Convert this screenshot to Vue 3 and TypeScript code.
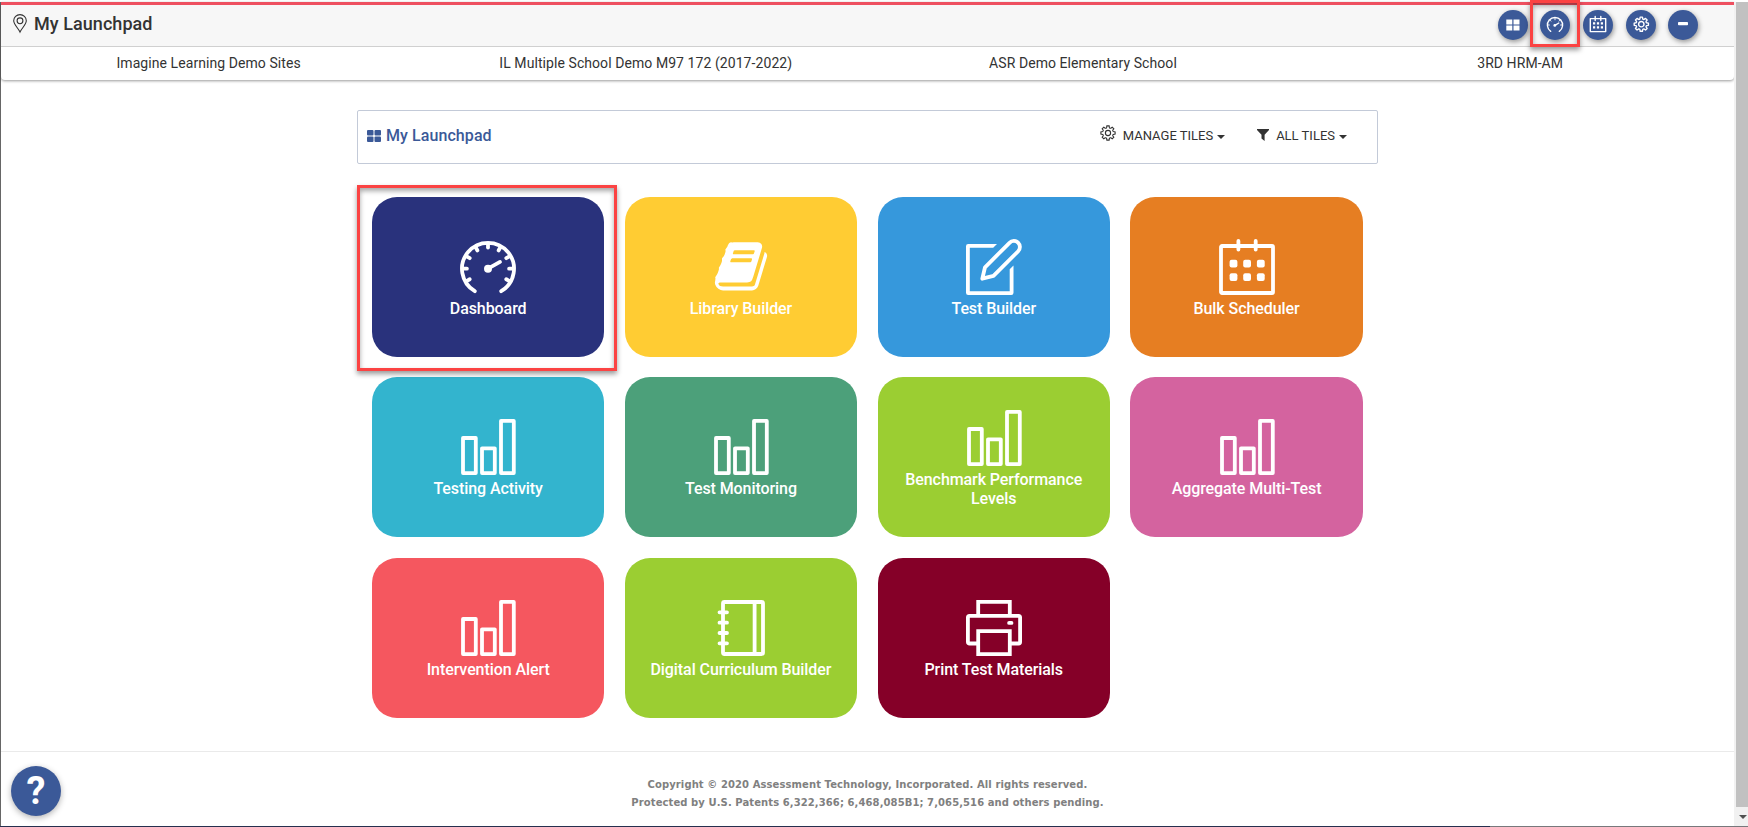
<script setup lang="ts">
type IconName = 'gauge' | 'book' | 'edit' | 'calendar' | 'bars' | 'notebook' | 'printer'

interface Tile {
  label: string
  icon: IconName
  tone: string
  highlighted?: boolean
}

const context: string[] = [
  'Imagine Learning Demo Sites',
  'IL Multiple School Demo M97 172 (2017-2022)',
  'ASR Demo Elementary School',
  '3RD HRM-AM',
]

const tiles: Tile[] = [
  { label: 'Dashboard', icon: 'gauge', tone: 'navy', highlighted: true },
  { label: 'Library Builder', icon: 'book', tone: 'yellow' },
  { label: 'Test Builder', icon: 'edit', tone: 'blue' },
  { label: 'Bulk Scheduler', icon: 'calendar', tone: 'orange' },
  { label: 'Testing Activity', icon: 'bars', tone: 'cyan' },
  { label: 'Test Monitoring', icon: 'bars', tone: 'green' },
  { label: 'Benchmark Performance Levels', icon: 'bars', tone: 'lime' },
  { label: 'Aggregate Multi-Test', icon: 'bars', tone: 'pink' },
  { label: 'Intervention Alert', icon: 'bars', tone: 'red' },
  { label: 'Digital Curriculum Builder', icon: 'notebook', tone: 'lime' },
  { label: 'Print Test Materials', icon: 'printer', tone: 'maroon' },
]

const tickAngles: number[] = [-120, -90, -60, -30, 0, 30, 60, 90, 120]

// Outline of a cog with eight rounded teeth, centred on 0,0.
function cogPath(outer: number, inner: number): string {
  const parts: string[] = []
  const at = (r: number, deg: number): string => {
    const a = (deg * Math.PI) / 180
    return `${(r * Math.cos(a)).toFixed(2)} ${(r * Math.sin(a)).toFixed(2)}`
  }
  for (let i = 0; i < 8; i++) {
    const d = i * 45
    parts.push(`${i === 0 ? 'M' : 'L'}${at(inner, d - 15)}L${at(outer, d - 9)}L${at(outer, d + 9)}L${at(inner, d + 15)}`)
    parts.push(`Q${at(inner - 0.6, d + 22.5)} ${at(inner, d + 30)}`)
  }
  return parts.join('') + 'Z'
}
const cog = cogPath(7.2, 5.5)
</script>

<template>
  <div class="window">
    <div class="page">
      <header class="header">
        <div class="titlebar">
          <svg class="pin" viewBox="0 0 14 19">
            <path d="M7 18 C5.5 14.5 0.7 10.5 0.7 6.8 A6.3 6.2 0 0 1 13.3 6.8 C13.3 10.5 8.5 14.5 7 18Z" />
            <circle cx="7" cy="6.8" r="2.9" />
          </svg>
          <h1>My Launchpad</h1>
          <nav class="actions">
            <button class="round">
              <svg viewBox="0 0 30 30"><path class="solid" d="M8.3 9.5h6v5h-6zM15.5 9.5h6v5h-6zM8.3 15.5h6v5h-6zM15.5 15.5h6v5h-6z" /></svg>
            </button>
            <button class="round">
              <svg viewBox="0 0 30 30">
                <path d="M10.7 21.3A7.6 7.6 0 1 1 19.3 21.3M15 15.3L18.8 13" />
                <circle class="solid" cx="14.8" cy="15.4" r="1.4" />
                <path class="fine" d="M15 8v1.8M7.6 15h1.8M20.6 15h1.8M9.7 9.9l1.2 1.2M20.3 9.9l-1.2 1.2" />
              </svg>
              <span class="marker"></span>
            </button>
            <button class="round">
              <svg viewBox="0 0 30 30">
                <path d="M7.3 8.6h15.4v13H7.3zM12.2 6.5v4M17.8 6.5v4" />
                <path class="solid" d="M10 12.3h2.2v2.2H10zM13.9 12.3h2.2v2.2h-2.2zM17.8 12.3H20v2.2h-2.2zM10 16.3h2.2v2.2H10zM13.9 16.3h2.2v2.2h-2.2zM17.8 16.3H20v2.2h-2.2z" />
              </svg>
            </button>
            <button class="round">
              <svg viewBox="0 0 30 30">
                <g transform="translate(15.3 14.2)"><path :d="cog" /><circle r="2.7" /></g>
              </svg>
            </button>
            <button class="round">
              <svg viewBox="0 0 30 30"><rect class="solid" x="10" y="12" width="10" height="3.2" rx="0.8" /></svg>
            </button>
          </nav>
        </div>
        <div class="context">
          <span v-for="item in context" :key="item">{{ item }}</span>
        </div>
      </header>

      <main class="content">
        <section class="panel">
          <svg class="grid-icon" viewBox="0 0 14 12">
            <rect width="6.5" height="5.5" rx="1" /><rect x="7.5" width="6.5" height="5.5" rx="1" />
            <rect y="6.5" width="6.5" height="5.5" rx="1" /><rect x="7.5" y="6.5" width="6.5" height="5.5" rx="1" />
          </svg>
          <h2>My Launchpad</h2>
          <div class="menu manage">
            <svg class="cog" viewBox="-8 -8 16 16"><path :d="cog" /><circle r="2.6" /></svg>
            <span>MANAGE TILES</span><i class="caret"></i>
          </div>
          <div class="menu filter">
            <svg class="funnel" viewBox="0 0 12 12"><path d="M0 0H12V1L7.6 5.7V12L4.5 9.5V5.7L0 1Z" /></svg>
            <span>ALL TILES</span><i class="caret"></i>
          </div>
        </section>

        <section class="tiles">
          <a v-for="tile in tiles" :key="tile.label" class="tile" :class="tile.tone">
            <svg v-if="tile.icon === 'gauge'" class="icon" viewBox="0 0 56 56">
              <path d="M14.8 52.2A26 26 0 1 1 41.2 52.2" />
              <path v-for="a in tickAngles" :key="a" d="M28 5V8.6" :transform="`rotate(${a} 28 29.7)`" />
              <path d="M28 29.7L40 22.9" />
              <circle class="fill" cx="28" cy="29.7" r="4" />
            </svg>
            <svg v-else-if="tile.icon === 'book'" class="icon" viewBox="-61 23 1786 1786">
              <path class="fill" d="M1639 478q40 57 18 129l-275 906q-19 64-76.5 107.5t-122.5 43.5h-923q-77 0-148.5-53.5t-99.5-131.5q-24-67-2-127 0-4 3-27t4-37q1-8-3-21.5t-3-19.5q2-11 8-21t16.5-23.5 16.5-23.5q23-38 45-91.5t30-91.5q3-10 .5-30t-.5-28q3-11 17-28t17-23q21-36 42-92t25-90q1-9-2.5-32t.5-28q4-13 22-30.5t22-22.5q19-26 42.5-84.5t27.5-96.5q1-8-3-25.5t-2-26.5q2-8 9-18t18-23 17-21q8-12 16.5-30.5t15-35 16-36 19.5-32 26.5-23.5 36-11.5 47.5 5.5l-1 3q38-9 51-9h761q74 0 114 56t18 130l-274 906q-36 119-71.5 153.5t-128.5 34.5h-869q-27 0-38 15-11 16-1 43 24 70 144 70h923q29 0 56-15.5t35-41.5l300-987q7-22 5-57 38 15 59 43zm-1064 2q-4 13 2 22.5t20 9.5h608q13 0 25.5-9.5t16.5-22.5l21-64q4-13-2-22.5t-20-9.5h-608q-13 0-25.5 9.5t-16.5 22.5zm-83 256q-4 13 2 22.5t20 9.5h608q13 0 25.5-9.5t16.5-22.5l21-64q4-13-2-22.5t-20-9.5h-608q-13 0-25.5 9.5t-16.5 22.5z" />
            </svg>
            <svg v-else-if="tile.icon === 'edit'" class="icon" viewBox="0 0 56 56">
              <path class="fill" d="M31 5H2.2Q0 5 0 7.2V53.8Q0 56 2.2 56H45.3Q47.5 56 47.5 53.8V26.5L43.7 30.3V52.2H3.8V8.8H27.2Z" />
              <path d="M16.3 39.7L19 28.3L43.5 3.8A5.9 5.9 0 0 1 52.2 12.2L27.5 36.9Z" />
            </svg>
            <svg v-else-if="tile.icon === 'calendar'" class="icon" viewBox="0 0 56 56">
              <rect x="2" y="7" width="52" height="47" rx="1" />
              <path d="M19.4 2V10.5M36.7 2V10.5" />
              <g class="fill">
                <rect x="10.6" y="20.8" width="7.8" height="7.8" rx="2" /><rect x="24.2" y="20.8" width="7.8" height="7.8" rx="2" /><rect x="37.9" y="20.8" width="7.8" height="7.8" rx="2" />
                <rect x="10.6" y="34.3" width="7.8" height="7.8" rx="2" /><rect x="24.2" y="34.3" width="7.8" height="7.8" rx="2" /><rect x="37.9" y="34.3" width="7.8" height="7.8" rx="2" />
              </g>
            </svg>
            <svg v-else-if="tile.icon === 'bars'" class="icon" viewBox="0 0 56 56">
              <rect x="3" y="19" width="12.8" height="35.1" />
              <rect x="22" y="29.3" width="12.8" height="24.8" />
              <rect x="41" y="1.9" width="12.8" height="52.2" />
            </svg>
            <svg v-else-if="tile.icon === 'notebook'" class="icon" viewBox="0 0 56 56">
              <rect x="10" y="2" width="40" height="52" rx="1.5" />
              <path d="M41.6 2V54M6.5 12.3H14M6.5 22.7H14M6.5 33H14M6.5 43.3H14" />
            </svg>
            <svg v-else class="icon" viewBox="0 0 56 56">
              <path class="square" d="M12.2 15V1.9H43.8V15M12.2 43.5H3.5Q1.9 43.5 1.9 42V17.5Q1.9 15.9 3.5 15.9H52.5Q54.1 15.9 54.1 17.5V42Q54.1 43.5 52.5 43.5H43.8M12.2 31.2H43.8V54.1H12.2Z" />
              <rect class="fill" x="41.2" y="21" width="6.2" height="3.8" rx="1.9" />
            </svg>
            <span class="label">{{ tile.label }}</span>
            <span v-if="tile.highlighted" class="marker"></span>
          </a>
        </section>
      </main>

      <footer class="footer">
        <p>Copyright © 2020 Assessment Technology, Incorporated. All rights reserved.</p>
        <p>Protected by U.S. Patents 6,322,366; 6,468,085B1; 7,065,516 and others pending.</p>
      </footer>
      <button class="help">?</button>
    </div>
    <div class="scrollbar">
      <div class="thumb"></div>
      <i class="arrow"></i>
    </div>
    <div class="taskbar"></div>
  </div>
</template>

<style>
html,
body {
  margin: 0;
  overflow: hidden;
}
</style>

<style scoped>
.window {
  position: relative;
  display: flex;
  width: 1748px;
  height: 827px;
  padding-top: 2px;
  box-sizing: border-box;
  overflow: hidden;
  background: #fff;
  color: #333;
  font-family: Roboto, "Liberation Sans", sans-serif;
}
h1, h2, p { margin: 0; }
button { border: 0; padding: 0; font: inherit; }
svg { display: block; overflow: visible; }

.page {
  flex: 1;
  display: flex;
  flex-direction: column;
  min-width: 0;
  border-left: 1px solid #666;
}
.header {
  height: 78px;
  border-radius: 0 0 4px 4px;
  box-shadow: 0 1px 3px rgba(0, 0, 0, 0.4);
}
.titlebar {
  display: flex;
  align-items: center;
  height: 45px;
  box-sizing: border-box;
  padding: 0 36px 2px 12px;
  border-top: 3px solid #ee5060;
  border-bottom: 1px solid #d0d0d0;
  background: #f7f7f7;
}
.pin {
  width: 14px;
  height: 19px;
  margin: -3px 7px 0 0;
  fill: none;
  stroke: #333;
  stroke-width: 1.1;
}
h1 {
  flex: 1;
  font-size: 18px;
  font-weight: 500;
  line-height: 24px;
  letter-spacing: 0.06px;
  padding-bottom: 2px;
}
.actions { display: flex; gap: 12.4px; }
.round {
  position: relative;
  width: 30px;
  height: 30px;
  border-radius: 50%;
  background: #3b5998;
  box-shadow: 1px 2px 5px rgba(0, 0, 0, 0.4);
}
.round:nth-child(2) { margin-left: -0.6px; margin-right: 0.6px; }
.round svg {
  width: 30px;
  height: 30px;
  fill: none;
  stroke: #fff;
  stroke-width: 1.4;
  stroke-linecap: round;
  stroke-linejoin: round;
}
.round .solid { fill: #fff; stroke: none; }
.round .fine { stroke-width: 0.9; }
.marker {
  position: absolute;
  box-sizing: border-box;
  border: 3px solid #fb4343;
  box-shadow: 0 3px 5px rgba(0, 0, 0, 0.4), inset 0 3px 5px rgba(0, 0, 0, 0.35);
  z-index: 2;
}
.round .marker { left: -10px; top: -10px; width: 50px; height: 47px; }

.context {
  display: grid;
  grid-template-columns: repeat(4, 437.2px);
  margin-left: -11px;
  height: 33px;
  line-height: 33px;
  font-size: 14px;
  letter-spacing: 0.07px;
  text-align: center;
}

.content { width: 1021px; margin: 30px auto 0 356px; }
.panel {
  display: flex;
  align-items: center;
  height: 54px;
  box-sizing: border-box;
  padding: 0 30px 3px 9px;
  border: 1px solid #c3cad8;
  border-radius: 2px;
}
.grid-icon { width: 14px; height: 12px; margin-right: 5px; fill: #3b5998; }
h2 {
  flex: 1;
  color: #3b5998;
  font-size: 16px;
  font-weight: 500;
  letter-spacing: 0.08px;
}
.menu { display: flex; align-items: center; font-size: 13px; line-height: 18px; }
.filter { margin-left: 32px; }
.caret {
  margin: 2px 0 0 4px;
  border: 4px solid transparent;
  border-top-color: #333;
  border-bottom: 0;
}
.cog { width: 16px; height: 16px; margin: -5px 7px 0 0; fill: none; stroke: #333; stroke-width: 1.1; }
.funnel { width: 12px; height: 12px; margin: -2px 7px 0 0; fill: #333; }

.tiles {
  display: grid;
  grid-template-columns: repeat(4, 232.3px);
  grid-auto-rows: 160px;
  gap: 20.4px 20.5px;
  padding: 33px 0 0 15px;
}
.tile {
  position: relative;
  display: flex;
  flex-direction: column;
  align-items: center;
  justify-content: center;
  gap: 4px;
  box-sizing: border-box;
  padding-top: 3px;
  border-radius: 25px;
  color: #fff;
}
.tile .marker { left: -15px; top: -12px; width: 260px; height: 186px; }
.navy { background: #29327c; }
.yellow { background: #ffcc33; }
.blue { background: #3698dc; }
.orange { background: #e67e22; }
.cyan { background: #33b4ce; }
.green { background: #4ca07a; }
.lime { background: #9bce32; }
.pink { background: #d4639f; }
.red { background: #f5575f; }
.maroon { background: #850028; }

.icon {
  width: 56px;
  height: 56px;
  fill: none;
  stroke: #fff;
  stroke-width: 3.8;
  stroke-linecap: round;
  stroke-linejoin: round;
}
.icon .fill { fill: #fff; stroke: none; }
.icon .square { stroke-linecap: butt; stroke-linejoin: miter; }
.label {
  max-width: 200px;
  font-size: 16px;
  font-weight: 500;
  line-height: 19px;
  letter-spacing: -0.08px;
  text-align: center;
}

.footer {
  margin-top: 33px;
  padding-top: 24px;
  border-top: 1px solid #eaeaea;
  color: #808080;
  font: bold 10px/18px "DejaVu Sans", sans-serif;
  letter-spacing: 0.09px;
  text-align: center;
}
.help {
  position: absolute;
  left: 11px;
  top: 766px;
  width: 50px;
  height: 50px;
  border-radius: 50%;
  background: #3b5998;
  box-shadow: 0 2px 6px rgba(0, 0, 0, 0.3);
  color: #fff;
  font: bold 38px/51px Roboto, sans-serif;
}
.scrollbar {
  display: flex;
  flex-direction: column;
  width: 14px;
  box-sizing: border-box;
  padding-left: 2px;
  background: #f1f1f1;
}
.thumb { height: 805px; background: #c1c1c1; }
.arrow {
  margin: 8px 0 0 3px;
  width: 0;
  border: 4px solid transparent;
  border-top-color: #505050;
  border-bottom: 0;
}
.taskbar {
  position: absolute;
  left: 0;
  bottom: 0;
  width: 100%;
  height: 1px;
  background: linear-gradient(90deg, #26304f 1490px, #77787c 1490px);
}
</style>
